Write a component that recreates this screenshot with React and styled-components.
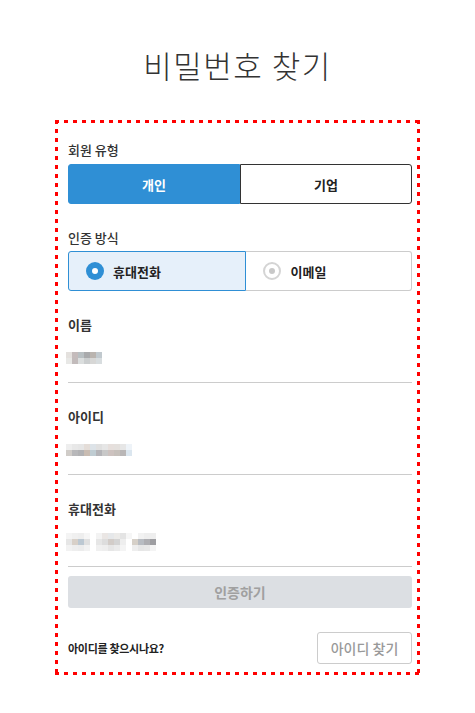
import React from "react";
import styled, { createGlobalStyle } from "styled-components";

const Global = createGlobalStyle`
  html, body { margin: 0; padding: 0; background: #fff; }
  body { font-family: "Noto Sans CJK KR", "Noto Sans", sans-serif; color: #333; }
  * { box-sizing: border-box; }
`;

const Page = styled.div`
  width: 475px;
  padding-top: 40px;
`;

const Title = styled.h1`
  margin: 0 0 30px;
  height: 50px;
  line-height: 50px;
  text-align: center;
  font-size: 31px;
  font-weight: 300;
  color: #333;
  letter-spacing: 1.5px;
`;

const dash = (dir) =>
  `repeating-linear-gradient(${dir}, #ff0000 0 4px, transparent 4px 9px)`;

const Box = styled.div`
  margin-left: 55px;
  width: 365px;
  padding: 21px 8px 11px 13px;
  display: flex;
  flex-direction: column;
  background:
    ${dash("90deg")} left top / 100% 3px no-repeat,
    ${dash("90deg")} left bottom / 100% 3px no-repeat,
    ${dash("180deg")} left top / 3px 100% no-repeat,
    ${dash("180deg")} right top / 3px 100% no-repeat;
`;

const GroupLabel = styled.div`
  font-size: 13px;
  line-height: 18px;
  font-weight: ${(p) => (p.$bold ? 700 : 500)};
  color: #333;
  margin-top: ${(p) => p.$mt || 0}px;
  margin-bottom: ${(p) => p.$mb || 0}px;
`;

const Toggle = styled.div`
  display: flex;
  height: 40px;
`;

const ToggleBtn = styled.div`
  flex: 1;
  display: flex;
  align-items: center;
  justify-content: center;
  font-size: 13px;
  font-weight: 700;
  color: ${(p) => (p.$active ? "#fff" : "#222")};
  background: ${(p) => (p.$active ? "#2f8fd5" : "#fff")};
  border: 1px solid ${(p) => (p.$active ? "#2f8fd5" : "#333")};
  border-radius: ${(p) => (p.$first ? "3px 0 0 3px" : "0 3px 3px 0")};
`;

const RadioGroup = styled.div`
  display: flex;
  height: 40px;
`;

const RadioItem = styled.div`
  flex: 1 1 auto;
  display: flex;
  align-items: center;
  gap: 9px;
  padding-left: 17px;
  font-size: 13px;
  font-weight: 700;
  color: #222;
  background: ${(p) => (p.$active ? "#e6f0fa" : "#fff")};
  border: 1px solid ${(p) => (p.$active ? "#2f8fd5" : "#ccc")};
  border-left-width: ${(p) => (p.$first ? 1 : 0)}px;
  border-radius: ${(p) => (p.$first ? "3px 0 0 3px" : "0 3px 3px 0")};
`;

const RadioDot = styled.span`
  width: 18px;
  height: 18px;
  border-radius: 50%;
  flex: none;
  display: flex;
  align-items: center;
  justify-content: center;
  background: ${(p) => (p.$active ? "#2f8fd5" : "#fff")};
  border: ${(p) => (p.$active ? "0" : "2px solid #d4d4d4")};
  &::after {
    content: "";
    width: 6px;
    height: 6px;
    border-radius: 50%;
    background: ${(p) => (p.$active ? "#fff" : "#c8c8c8")};
  }
`;

const Field = styled.div`
  margin-top: 25px;
  border-bottom: 1px solid #ccc;
`;

const ValueRow = styled.div`
  height: 48px;
  display: flex;
  align-items: center;
  margin-left: -2px;
`;

const Mosaic = styled.div`
  display: grid;
  grid-template-columns: repeat(${(p) => p.$cols}, 6px);
  grid-auto-rows: 6px;
`;

const Cell = styled.span`
  display: block;
  background: ${(p) => p.$c};
`;

const SubmitBtn = styled.button`
  margin-top: 9px;
  height: 32px;
  border: none;
  border-radius: 3px;
  background: #dcdfe3;
  color: #a0a0a0;
  font-family: inherit;
  font-size: 14px;
  font-weight: 700;
  width: 100%;
`;

const Bottom = styled.div`
  margin-top: 24px;
  display: flex;
  align-items: center;
  justify-content: space-between;
`;

const Question = styled.span`
  font-size: 11px;
  font-weight: 700;
  color: #222;
  letter-spacing: -0.3px;
`;

const FindBtn = styled.button`
  width: 95px;
  height: 32px;
  background: #fff;
  border: 1px solid #ccc;
  border-radius: 3px;
  color: #999;
  font-family: inherit;
  font-size: 14px;
  font-weight: 500;
`;

const nameCells = [
  "#e4e1de", "#c4bbbb", "#b8bfc2", "#a9aaac", "#bab4af", "#c1c9ce",
  "#e8e8e6", "#c2bbbb", "#dbdede", "#cbcecf", "#d7d7d6", "#d8dddf",
];
const idCells = [
  "#eeeeee", "#e8e8e8", "#e6e6e6", "#e4ddd8", "#dde3e8", "#e0e0e0", "#e6e6e6", "#e6dfdc", "#e4e0dd", "#e6e6e6", "#eef3f8",
  "#d0ccc8", "#b8b8ba", "#b2b2b4", "#c9bcb2", "#bfccd2", "#b4b4b8", "#c8c8c8", "#cdc2bf", "#c6c0bb", "#b9b6b6", "#dbe6ef",
];
const phoneCells = [
  "#f4f4f4", "#f0f0f0", "#eeeeee", "#f6f6f6", "#ffffff", "#f3f3f3", "#eae6e4", "#e6e8ea", "#ecebe9", "#e4e4e4", "#f6f6f6", "#ffffff", "#f2f2f2", "#eeeeee", "#eeeeee",
  "#e6e6e6", "#d8d0c8", "#bcc8d2", "#e0e0e0", "#ffffff", "#e6e6e6", "#dddddd", "#d2ccc8", "#d4d4d4", "#eeeeee", "#ffffff", "#d6d0c8", "#b8bcc2", "#aeaeb2", "#9e9ea2",
  "#f2f2f2", "#eeeeee", "#ececec", "#f2f2f2", "#ffffff", "#f0f0f0", "#eeeeee", "#e6e6e6", "#ebebeb", "#f4f4f4", "#ffffff", "#eeeeee", "#e6e6e6", "#e8e8e8", "#f4f4f4",
];

function Blur({ cells, cols }) {
  return (
    <Mosaic $cols={cols}>
      {cells.map((c, i) => (
        <Cell key={i} $c={c} />
      ))}
    </Mosaic>
  );
}

export default function App() {
  return (
    <Page>
      <Global />
      <Title>비밀번호 찾기</Title>
      <Box>
        <GroupLabel $mb={5}>회원 유형</GroupLabel>
        <Toggle>
          <ToggleBtn $active $first>개인</ToggleBtn>
          <ToggleBtn>기업</ToggleBtn>
        </Toggle>

        <GroupLabel $mt={25} $mb={4}>인증 방식</GroupLabel>
        <RadioGroup>
          <RadioItem $active $first>
            <RadioDot $active />
            휴대전화
          </RadioItem>
          <RadioItem>
            <RadioDot />
            이메일
          </RadioItem>
        </RadioGroup>

        <Field>
          <GroupLabel $bold>이름</GroupLabel>
          <ValueRow>
            <Blur cells={nameCells} cols={6} />
          </ValueRow>
        </Field>
        <Field>
          <GroupLabel $bold>아이디</GroupLabel>
          <ValueRow>
            <Blur cells={idCells} cols={11} />
          </ValueRow>
        </Field>
        <Field>
          <GroupLabel $bold>휴대전화</GroupLabel>
          <ValueRow>
            <Blur cells={phoneCells} cols={15} />
          </ValueRow>
        </Field>

        <SubmitBtn type="button">인증하기</SubmitBtn>

        <Bottom>
          <Question>아이디를 찾으시나요?</Question>
          <FindBtn type="button">아이디 찾기</FindBtn>
        </Bottom>
      </Box>
    </Page>
  );
}
